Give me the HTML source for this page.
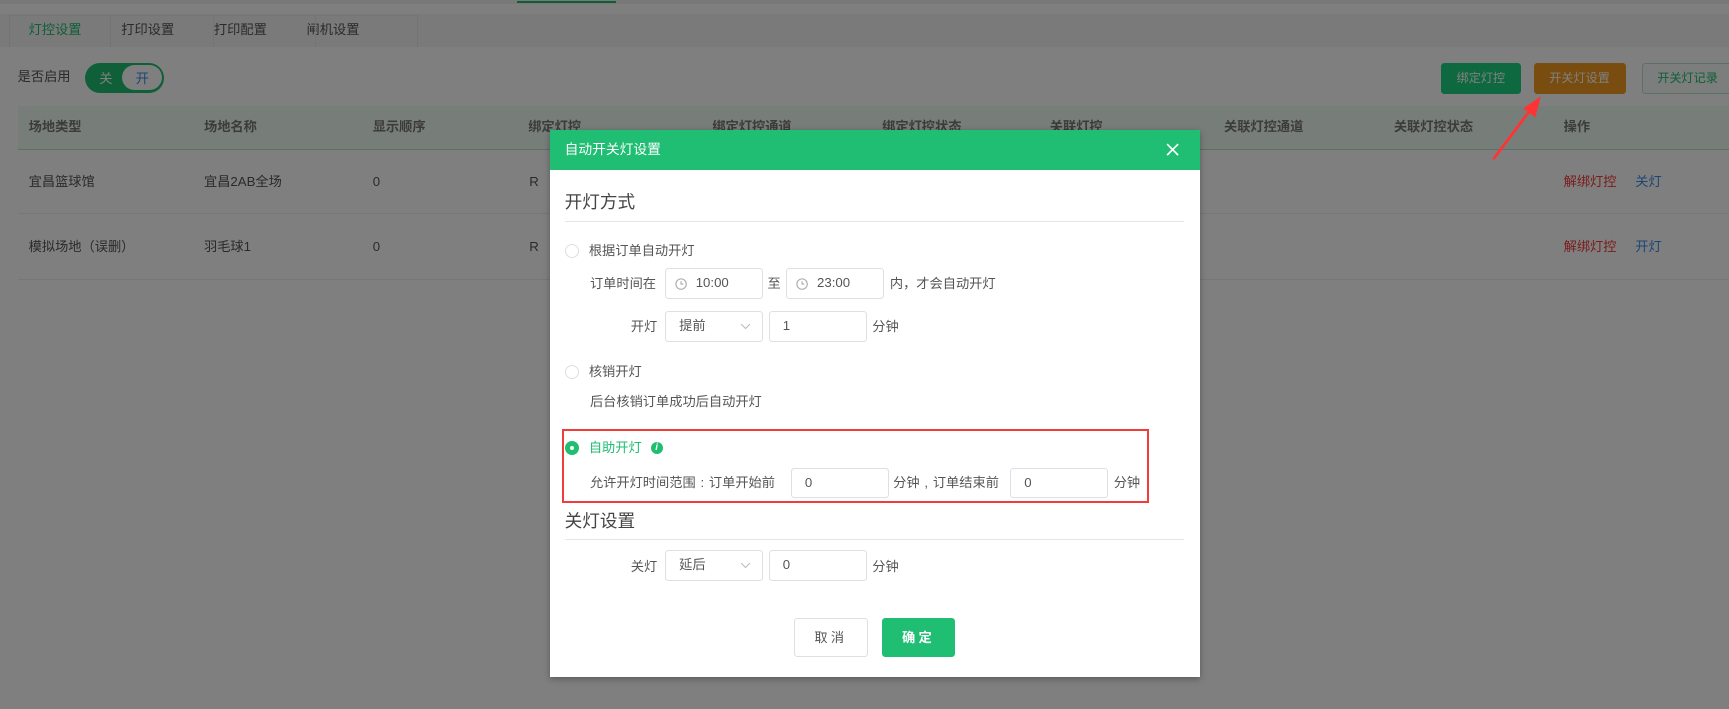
<!DOCTYPE html>
<html><head><meta charset="utf-8"><style>
*{margin:0;padding:0;box-sizing:border-box}
html,body{width:1729px;height:709px;overflow:hidden;background:#fff}
#root{zoom:1.1027;width:1568px;height:643px;position:relative;font-family:"Liberation Sans","Noto Sans CJK SC",sans-serif;font-size:12px;color:#555}
.a{position:absolute;white-space:nowrap}
.t{line-height:14px}
.inp{position:absolute;height:28px;width:89px;background:#fff;border:1px solid #dcdfe6;border-radius:3px;font-size:12px;color:#555;line-height:26px;padding-left:12px}
.rad{position:absolute;width:13px;height:13px;border:1px solid #dcdfe6;border-radius:50%;background:#fff}
.mt{color:#555}
.th{top:108px;color:#777;font-weight:bold}
</style></head><body><div id="root">
<div class="a" style="left:0;top:0;width:1568px;height:4px;background:#f0f0f0"></div>
<div class="a" style="left:469px;top:1px;width:90px;height:2px;background:#1dbb6f"></div>
<div class="a" style="left:0;top:13px;width:1568px;height:30px;background:#f4f4f4"></div>
<div class="a" style="left:8px;top:14px;width:371px;height:29px;border:1px solid #e8e8e8;border-bottom:none"></div>
<div class="a t" style="left:26px;top:20px;color:#20be73">灯控设置</div>
<div class="a t" style="left:110px;top:20px">打印设置</div>
<div class="a t" style="left:194px;top:20px">打印配置</div>
<div class="a t" style="left:278px;top:20px">闸机设置</div>
<div class="a" style="left:100px;top:14px;width:1px;height:29px;background:#e8e8e8"></div>
<div class="a" style="left:193px;top:14px;width:1px;height:29px;background:#e8e8e8"></div>
<div class="a" style="left:286px;top:14px;width:1px;height:29px;background:#e8e8e8"></div>
<div class="a" style="left:0;top:43px;width:1568px;height:600px;background:#fff"></div>
<div class="a t" style="left:16px;top:63px">是否启用</div>
<div class="a" style="left:77px;top:57px;width:72px;height:27px;border-radius:14px;background:#1fbe72"></div>
<div class="a t" style="left:90px;top:64px;color:#fff">关</div>
<div class="a" style="left:111px;top:59px;width:36px;height:23px;border-radius:12px;background:#fff"></div>
<div class="a t" style="left:123px;top:64px;color:#3a8ee6">开</div>
<div class="a" style="left:1307px;top:57px;width:72px;height:28px;border-radius:3px;background:#1ed381"></div>
<div class="a t" style="left:1321px;top:64px;color:#fff;font-size:11px">绑定灯控</div>
<div class="a" style="left:1391px;top:57px;width:84px;height:28px;border-radius:3px;background:#f39a20"></div>
<div class="a t" style="left:1405px;top:64px;color:#fff;font-size:11px">开关灯设置</div>
<div class="a" style="left:1489px;top:57px;width:90px;height:28px;border-radius:3px;border:1px solid #b5e3cc;background:#f7fdf9"></div>
<div class="a t" style="left:1503px;top:64px;color:#1fbe72;font-size:11px">开关灯记录</div>
<div class="a" style="left:16px;top:96px;width:1552px;height:40px;background:#eefcf2;border-bottom:1px solid #b5e3cc"></div>
<div class="a t th" style="left:26px">场地类型</div>
<div class="a t th" style="left:185px">场地名称</div>
<div class="a t th" style="left:338px">显示顺序</div>
<div class="a t th" style="left:479px">绑定灯控</div>
<div class="a t th" style="left:646px">绑定灯控通道</div>
<div class="a t th" style="left:800px">绑定灯控状态</div>
<div class="a t th" style="left:952px">关联灯控</div>
<div class="a t th" style="left:1110px">关联灯控通道</div>
<div class="a t th" style="left:1264px">关联灯控状态</div>
<div class="a t th" style="left:1418px">操作</div>
<div class="a" style="left:16px;top:193px;width:1552px;height:1px;background:#eee"></div>
<div class="a" style="left:16px;top:253px;width:1552px;height:1px;background:#eee"></div>
<div class="a t" style="top:158px;left:26px">宜昌篮球馆</div>
<div class="a t" style="top:158px;left:185px">宜昌2AB全场</div>
<div class="a t" style="top:158px;left:338px">0</div>
<div class="a t" style="top:158px;left:480px">R</div>
<div class="a t" style="top:158px;left:1418px;color:#f33a3a">解绑灯控</div>
<div class="a t" style="top:158px;left:1483px;color:#3a8ee6">关灯</div>
<div class="a t" style="top:217px;left:26px">模拟场地（误删）</div>
<div class="a t" style="top:217px;left:185px">羽毛球1</div>
<div class="a t" style="top:217px;left:338px">0</div>
<div class="a t" style="top:217px;left:480px">R</div>
<div class="a t" style="top:217px;left:1418px;color:#f33a3a">解绑灯控</div>
<div class="a t" style="top:217px;left:1483px;color:#3a8ee6">开灯</div>
<div class="a" style="left:0;top:0;width:1568px;height:643px;background:rgba(0,0,0,.5)"></div>
<svg class="a" style="left:1350px;top:84px" width="52" height="64"><line x1="4" y1="60" x2="40" y2="12" stroke="#f33" stroke-width="2.5"/><polygon points="47,3 31,14 42,22" fill="#f33"/></svg>
<div class="a" style="left:499px;top:118px;width:589px;height:496px;background:#fff;box-shadow:0 2px 6px rgba(0,0,0,.3)"></div>
<div class="a" style="left:499px;top:118px;width:589px;height:36px;background:#20be73"></div>
<div class="a t" style="left:512px;top:129px;color:#fff;font-size:12.5px">自动开关灯设置</div>
<svg class="a" style="left:1057px;top:130px" width="12" height="12"><path d="M1 1L11 11M11 1L1 11" stroke="#fff" stroke-width="1.5"/></svg>
<div class="a" style="left:512px;top:175px;font-size:16px;color:#444;line-height:18px">开灯方式</div>
<div class="a" style="left:512px;top:200px;width:562px;height:1px;background:#e6e6e6"></div>
<div class="rad" style="left:512px;top:221px"></div>
<div class="a t mt" style="left:534px;top:220px">根据订单自动开灯</div>
<div class="a t mt" style="left:535px;top:250px">订单时间在</div>
<div class="inp" style="left:603px;top:243px;padding-left:27px">10:00</div>
<svg class="a" style="left:612px;top:252px" width="11" height="11"><circle cx="5.5" cy="5.5" r="4.7" fill="none" stroke="#aaa"/><path d="M5.5 3V5.5H7.5" stroke="#aaa" fill="none"/></svg>
<div class="a t mt" style="left:696px;top:250px">至</div>
<div class="inp" style="left:713px;top:243px;padding-left:27px">23:00</div>
<svg class="a" style="left:722px;top:252px" width="11" height="11"><circle cx="5.5" cy="5.5" r="4.7" fill="none" stroke="#aaa"/><path d="M5.5 3V5.5H7.5" stroke="#aaa" fill="none"/></svg>
<div class="a t mt" style="left:807px;top:250px">内，才会自动开灯</div>
<div class="a t mt" style="left:572px;top:289px">开灯</div>
<div class="inp" style="left:603px;top:282px">提前</div>
<svg class="a" style="left:671px;top:293px" width="10" height="6"><path d="M1 1L5 5L9 1" stroke="#bbb" fill="none"/></svg>
<div class="inp" style="left:697px;top:282px">1</div>
<div class="a t mt" style="left:791px;top:289px">分钟</div>
<div class="rad" style="left:512px;top:331px"></div>
<div class="a t mt" style="left:534px;top:330px">核销开灯</div>
<div class="a t mt" style="left:535px;top:357px">后台核销订单成功后自动开灯</div>
<div class="a" style="left:510px;top:389px;width:532px;height:67px;border:2px solid #f23c3c"></div>
<div class="a" style="left:512px;top:400px;width:13px;height:13px;border-radius:50%;background:#20be73"></div>
<div class="a" style="left:516.5px;top:404.5px;width:4px;height:4px;border-radius:50%;background:#fff"></div>
<div class="a t" style="left:534px;top:399px;color:#20be73">自助开灯</div>
<div class="a" style="left:590px;top:401px;width:11px;height:11px;border-radius:50%;background:#20be73;color:#fff;font-size:9px;line-height:11px;text-align:center;font-style:italic;font-weight:bold">i</div>
<div class="a t mt" style="left:535px;top:431px">允许开灯时间范围<span style="display:inline-block;width:12px;text-align:center">:</span>订单开始前</div>
<div class="inp" style="left:717px;top:424px">0</div>
<div class="a t mt" style="left:810px;top:431px">分钟<span style="display:inline-block;width:12px;text-align:center">,</span>订单结束前</div>
<div class="inp" style="left:916px;top:424px">0</div>
<div class="a t mt" style="left:1010px;top:431px">分钟</div>
<div class="a" style="left:512px;top:464px;font-size:16px;color:#444;line-height:18px">关灯设置</div>
<div class="a" style="left:512px;top:489px;width:562px;height:1px;background:#e6e6e6"></div>
<div class="a t mt" style="left:572px;top:507px">关灯</div>
<div class="inp" style="left:603px;top:499px">延后</div>
<svg class="a" style="left:671px;top:510px" width="10" height="6"><path d="M1 1L5 5L9 1" stroke="#bbb" fill="none"/></svg>
<div class="inp" style="left:697px;top:499px">0</div>
<div class="a t mt" style="left:791px;top:507px">分钟</div>
<div class="a" style="left:720px;top:560px;width:67px;height:36px;border:1px solid #dcdfe6;border-radius:3px;text-align:center;line-height:34px;color:#555;letter-spacing:3px">取消</div>
<div class="a" style="left:800px;top:560px;width:66px;height:36px;border-radius:3px;background:#20be73;text-align:center;line-height:36px;color:#fff;letter-spacing:3px;font-weight:bold">确定</div>
</div></body></html>
